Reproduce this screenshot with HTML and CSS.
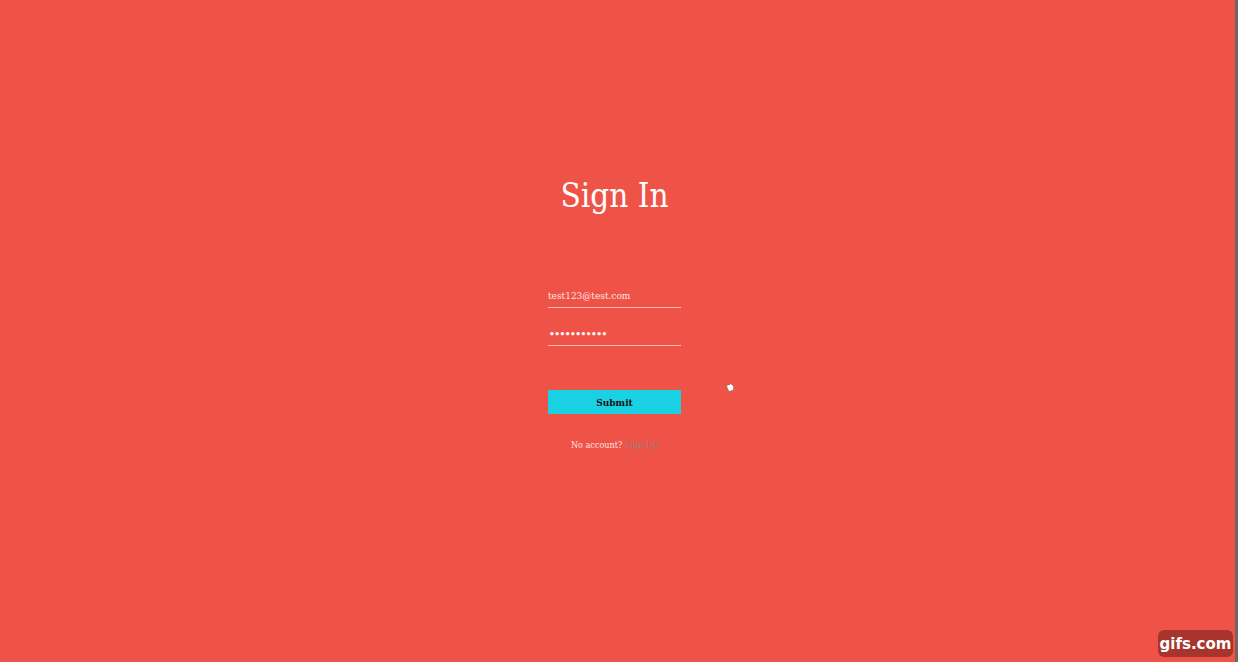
FILE: index.html
```html
<!DOCTYPE html>
<html>
<head>
<meta charset="utf-8">
<link rel="stylesheet" href="styles.css">
</head>
<body>
<div class="page">
  <main class="signin">
    <h1 class="title">Sign In</h1>
    <form class="form">
      <div class="field"><span class="value">test123@test.com</span></div>
      <div class="field"><span class="value dots">•••••••••••</span></div>
      <button type="button" class="submit">Submit</button>
      <p class="alt">No account? <a class="link">Sign Up</a></p>
    </form>
  </main>
  <div class="edge"></div>
</div>
<div class="cursor"><svg class="cursor-icon" width="8" height="9" viewBox="0 0 8 9"><path d="M0.5 2.5 L4 1.5 L4.5 0.5 L5.5 1.5 L7.5 3 L7.5 7 L3 8.5 L1.5 5.5 Z" fill="#fff" stroke="#555" stroke-width="0.4"/></svg></div>
<div class="badge">gifs.com</div>
</body>
</html>
```
FILE: styles.css
```css
html, body {
  margin: 0;
  height: 100%;
}
body {
  background: #ef5347;
  font-family: "DejaVu Serif", serif;
  font-stretch: condensed;
  overflow: hidden;
}
.page {
  display: flex;
  height: 662px;
}
.signin {
  flex: 1;
  display: flex;
  flex-direction: column;
  align-items: center;
  padding-top: 176px;
  padding-right: 6px;
}
.edge {
  width: 3px;
  background: #6f6761;
}
.title {
  margin: 0;
  font-weight: normal;
  font-size: 33px;
  line-height: 40px;
  color: #fff;
}
.form {
  margin-top: 62px;
  width: 133px;
  display: flex;
  flex-direction: column;
}
.field {
  border-bottom: 1px solid #f6b7b0;
  height: 24px;
  display: flex;
  align-items: flex-end;
  padding-bottom: 5px;
  margin-bottom: 8px;
}
.value {
  color: #fce3e0;
  font-size: 10px;
  line-height: 12px;
}
.dots {
  font-size: 10px;
  font-weight: bold;
  letter-spacing: -0.5px;
  padding-left: 1px;
  color: #fff;
}
.submit {
  margin-top: 36px;
  height: 24px;
  background: #1ad1e3;
  border: none;
  font-family: "DejaVu Serif", serif;
  font-stretch: condensed;
  font-weight: bold;
  font-size: 10px;
  color: #111;
  padding: 0;
}
.alt {
  margin: 26px 0 0;
  text-align: center;
  font-size: 9px;
  color: #fbe4e2;
}
.link {
  color: #9a7d7e;
}
.cursor {
  position: absolute;
  left: 726px;
  top: 383px;
}
.cursor-icon {
  display: block;
}
.badge {
  position: absolute;
  left: 1158px;
  top: 630px;
  width: 75px;
  height: 27px;
  border-radius: 6px;
  background: #a8352d;
  color: #fff;
  font-family: "DejaVu Sans", sans-serif;
  font-stretch: normal;
  font-weight: bold;
  font-size: 15px;
  display: flex;
  align-items: center;
  justify-content: center;
}
```
